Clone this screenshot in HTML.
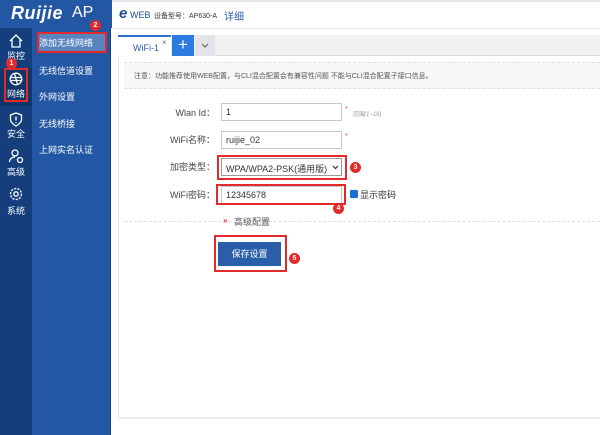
<!DOCTYPE html>
<html><head><meta charset="utf-8"><style>
*{margin:0;padding:0;box-sizing:border-box}
body{width:600px;height:435px;overflow:hidden;background:#fff;font-family:"Liberation Sans","Noto Sans CJK SC",sans-serif;position:relative}
.abs{position:absolute}
.logo{left:0;top:0;width:112px;height:28px;background:#2357a3}
.col1{left:0;top:28px;width:32px;height:407px;background:#143f7c}
.col2{left:32px;top:28px;width:79px;height:407px;background:#2357a3;border-right:1px solid #1a3f78}
.ni{position:absolute;left:0;width:32px;text-align:center;color:#fff;font-size:9px}
.sm{position:absolute;left:6px;color:#fff;font-size:9px}
.red{border:2px solid #e32a2a}
.badge{width:11px;height:11px;border-radius:50%;background:#e32a2a;color:#fff;font-size:7px;text-align:center;line-height:11px;font-weight:bold}
.lbl{position:absolute;right:0;font-size:9px;color:#444;text-align:right}
.inp{position:absolute;left:221px;width:121px;height:18px;border:1px solid #c8c8c8;font-size:9px;color:#333;padding:3px 4px;background:#fff}
</style></head><body>
<div class="abs logo"><span style="position:absolute;left:11px;top:3px;color:#fff;font:italic bold 18px 'Liberation Sans',sans-serif;letter-spacing:0.5px">Ruijie</span><span style="position:absolute;left:72px;top:4px;color:#fff;font-size:16px">AP</span></div>
<div class="abs col1"></div>
<div class="abs col2"></div>
<div class="abs" style="left:0;top:68px;width:32px;height:38px;background:#0f356a"></div>
<svg class="abs" style="left:8px;top:33px" width="16" height="16" viewBox="0 0 16 16" fill="none" stroke="#fff" stroke-width="1.3"><path d="M2 8L8 2L14 8M4 6.5V14H12V6.5"/></svg>
<div class="ni" style="top:49px">监控</div>
<svg class="abs" style="left:9px;top:72px" width="14" height="14" viewBox="0 0 14 14" fill="none" stroke="#fff" stroke-width="1.3"><circle cx="7" cy="7" r="5.8"/><path d="M2 5.5h10M2 8.5h10M5.5 1.5l3 11"/></svg>
<div class="ni" style="top:87px">网络</div>
<svg class="abs" style="left:9px;top:112px" width="14" height="15" viewBox="0 0 14 15" fill="none" stroke="#fff" stroke-width="1.3"><path d="M7 1L12.5 3V7.5C12.5 11 7 14 7 14C7 14 1.5 11 1.5 7.5V3Z M7 4.5V8.5 M7 10v1"/></svg>
<div class="ni" style="top:127px">安全</div>
<svg class="abs" style="left:8px;top:148px" width="16" height="16" viewBox="0 0 16 16" fill="none" stroke="#fff" stroke-width="1.3"><circle cx="7" cy="5" r="3"/><path d="M1.5 14c0-3 2.5-5 5.5-5"/><circle cx="12" cy="12" r="2.5"/></svg>
<div class="ni" style="top:165px">高级</div>
<svg class="abs" style="left:9px;top:187px" width="14" height="14" viewBox="0 0 14 14" fill="none" stroke="#fff" stroke-width="1.3"><circle cx="7" cy="7" r="2.2"/><circle cx="7" cy="7" r="5.5" stroke-dasharray="2.2 1.2"/></svg>
<div class="ni" style="top:204px">系统</div>
<div class="abs red" style="left:4px;top:68px;width:24px;height:34px"></div>
<div class="abs badge" style="left:6px;top:58px">1</div>
<div class="abs" style="left:37px;top:32px;width:70px;height:21px;background:#5a84c0"></div>
<div class="abs red" style="left:37px;top:32px;width:70px;height:21px"></div>
<div class="abs badge" style="left:90px;top:20px">2</div>
<div class="sm" style="left:39px;top:36px">添加无线网络</div>
<div class="sm" style="left:39px;top:64px">无线信道设置</div>
<div class="sm" style="left:39px;top:90px">外网设置</div>
<div class="sm" style="left:39px;top:117px">无线桥接</div>
<div class="sm" style="left:39px;top:143px">上网实名认证</div>
<div class="abs" style="left:112px;top:0;width:488px;height:2px;background:#e6e6ea"></div>
<div class="abs" style="left:112px;top:28px;width:488px;height:1px;background:#e4e4e4"></div>
<div class="abs" style="left:119px;top:5px;font:italic bold 15px 'Liberation Sans',sans-serif;color:#1e4f9a">e</div>
<div class="abs" style="left:130px;top:10px;font-size:9px;color:#1e4f9a">WEB</div>
<div class="abs" style="left:154px;top:11px;font-size:7px;color:#333;white-space:nowrap">设备型号：AP630-A</div>
<div class="abs" style="left:224px;top:8px;font-size:10px;color:#2a5ea8">详细</div>
<div class="abs" style="left:118px;top:35px;width:482px;height:21px;background:#f0f1f3;border-bottom:1px solid #ddd"></div>
<div class="abs" style="left:118px;top:35px;width:53px;height:22px;background:#fff;border-top:2px solid #2a70d0"></div>
<div class="abs" style="left:133px;top:43px;font-size:9px;color:#2a5ea8">WiFi-1</div>
<div class="abs" style="left:162px;top:38px;font-size:8px;color:#666">×</div>
<div class="abs" style="left:172px;top:35px;width:22px;height:21px;background:#2a7ae0;color:#fff;font-size:17px;text-align:center;line-height:20px">+</div>
<div class="abs" style="left:195px;top:35px;width:20px;height:21px;background:#e2e4e8"></div>
<svg class="abs" style="left:201px;top:43px" width="8" height="6" viewBox="0 0 8 6" fill="none" stroke="#666" stroke-width="1.2"><path d="M1 1l3 3 3-3"/></svg>
<div class="abs" style="left:118px;top:57px;width:482px;height:362px;border-left:1px solid #e2e2e2;border-bottom:2px solid #ececec"></div>
<div class="abs" style="left:124px;top:62px;width:476px;height:27px;background:#f8f8f8;border-top:1px dashed #e0e0e0;border-bottom:1px dashed #e0e0e0"></div>
<div class="abs" style="left:134px;top:71px;font-size:7px;color:#555">注意：功能推荐使用WEB配置，与CLI混合配置会有兼容性问题 不能与CLI混合配置子接口信息。</div>
<div class="abs" style="left:120px;top:104px;width:95px"><div class="lbl" style="top:2px">Wlan Id：</div></div>
<div class="abs" style="left:120px;top:131px;width:95px"><div class="lbl" style="top:2px">WiFi名称：</div></div>
<div class="abs" style="left:120px;top:158px;width:95px"><div class="lbl" style="top:2px">加密类型：</div></div>
<div class="abs" style="left:120px;top:186px;width:95px"><div class="lbl" style="top:2px">WiFi密码：</div></div>
<div class="inp" style="top:103px">1</div>
<div class="abs" style="left:345px;top:106px;font-size:7px;color:#e33">*</div>
<div class="abs" style="left:352px;top:109px;font-size:6px;font-style:italic;color:#999">范围(1~16)</div>
<div class="inp" style="top:131px">ruijie_02</div>
<div class="abs" style="left:345px;top:133px;font-size:7px;color:#e33">*</div>
<div class="inp" style="top:158px;border-color:#999">WPA/WPA2-PSK(通用版)</div>
<svg class="abs" style="left:332px;top:165px" width="7" height="5" viewBox="0 0 7 5" fill="none" stroke="#333" stroke-width="1.2"><path d="M1 1l2.5 2.5L6 1"/></svg>
<div class="abs red" style="left:217px;top:155px;width:130px;height:25px"></div>
<div class="abs badge" style="left:350px;top:162px">3</div>
<div class="inp" style="top:186px">12345678</div>
<div class="abs red" style="left:216px;top:184px;width:130px;height:21px"></div>
<div class="abs badge" style="left:333px;top:203px">4</div>
<div class="abs" style="left:350px;top:190px;width:8px;height:8px;background:#1a6fd8;border-radius:1px"></div>
<div class="abs" style="left:360px;top:188px;font-size:9px;color:#333">显示密码</div>
<div class="abs" style="left:124px;top:221px;width:476px;border-top:1px dashed #ddd"></div>
<div class="abs" style="left:223px;top:216px;font-size:8px;color:#e33;font-weight:bold">»</div>
<div class="abs" style="left:234px;top:215px;font-size:9px;color:#555">高级配置</div>
<div class="abs" style="left:218px;top:242px;width:63px;height:24px;background:#2a5ea8;color:#fff;font-size:9px;text-align:center;line-height:24px">保存设置</div>
<div class="abs red" style="left:214px;top:235px;width:73px;height:37px"></div>
<div class="abs badge" style="left:289px;top:253px">5</div>
</body></html>
